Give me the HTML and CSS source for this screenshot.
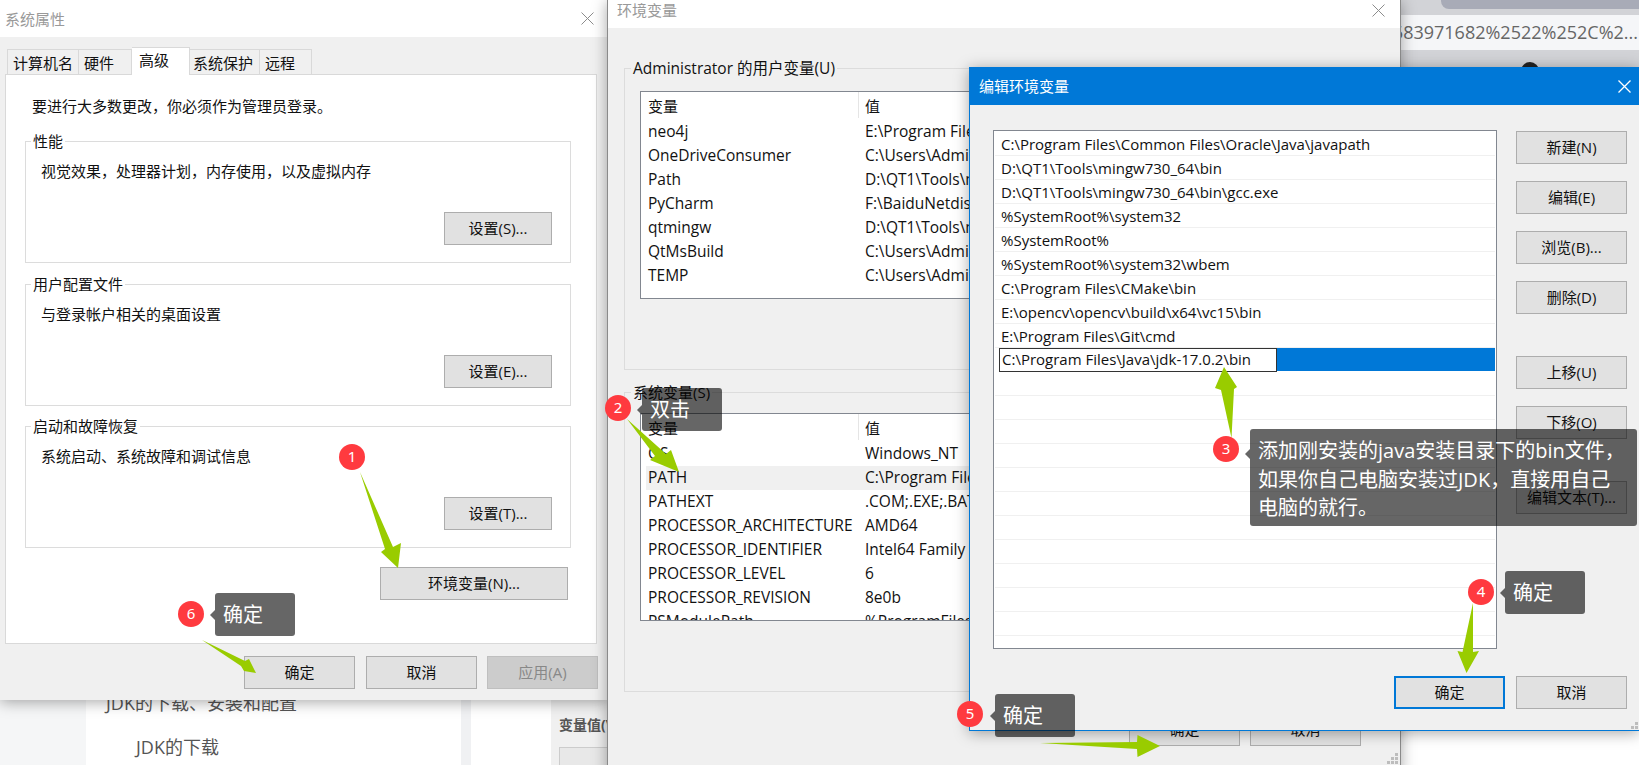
FILE: index.html
```html
<!DOCTYPE html>
<html lang="zh-CN">
<head>
    <meta charset="UTF-8">
    <title>环境变量配置</title>
    <link rel="stylesheet" href="styles.css">
</head>
<body>
<div class="desktop">

    <!-- Web page behind the dialogs -->
    <div class="backdrop">
        <div class="page-side"></div>
        <div class="page-card">
            <div class="toc-main">JDK的下载、安装和配置</div>
            <div class="toc-sub">JDK的下载</div>
        </div>
        <div class="page-gap"></div>
        <div class="page-white"></div>
        <div class="page-form">
            <div class="form-label">变量值(V</div>
            <div class="form-input"></div>
        </div>
    </div>
    <div class="browser-strip">
        <div class="strip-top"><div class="strip-pill"></div></div>
        <div class="strip-url">683971682%2522%252C%2...</div>
        <div class="strip-bottom"><div class="strip-dot"></div></div>
    </div>

    <!-- 系统属性 -->
    <div class="win win-system">
        <div class="titlebar">
            <span class="title-text">系统属性</span>
            <svg class="close-x" width="13" height="13" viewBox="0 0 13 13"><path d="M.5.5l12 12M12.5.5l-12 12"/></svg>
        </div>
        <div class="system-body">
            <div class="tabs">
                <div class="tab">计算机名</div>
                <div class="tab">硬件</div>
                <div class="tab tab-active">高级</div>
                <div class="tab tab-tight">系统保护</div>
                <div class="tab">远程</div>
            </div>
            <div class="tab-panel">
                <p class="admin-note">要进行大多数更改，你必须作为管理员登录。</p>
                <fieldset class="group sys-group">
                    <legend>性能</legend>
                    <p>视觉效果，处理器计划，内存使用，以及虚拟内存</p>
                    <div class="group-actions"><button class="btn btn-set">设置(S)...</button></div>
                </fieldset>
                <fieldset class="group sys-group">
                    <legend>用户配置文件</legend>
                    <p>与登录帐户相关的桌面设置</p>
                    <div class="group-actions"><button class="btn btn-set">设置(E)...</button></div>
                </fieldset>
                <fieldset class="group sys-group sys-group-last">
                    <legend>启动和故障恢复</legend>
                    <p>系统启动、系统故障和调试信息</p>
                    <div class="group-actions"><button class="btn btn-set">设置(T)...</button></div>
                </fieldset>
                <div class="env-action"><button class="btn btn-env">环境变量(N)...</button></div>
            </div>
            <div class="footer-btns system-footer">
                <button class="btn">确定</button>
                <button class="btn">取消</button>
                <button class="btn btn-disabled">应用(A)</button>
            </div>
        </div>
    </div>

    <!-- 环境变量 -->
    <div class="win win-env">
        <div class="titlebar titlebar-env">
            <span class="title-text">环境变量</span>
            <svg class="close-x" width="13" height="13" viewBox="0 0 13 13"><path d="M.5.5l12 12M12.5.5l-12 12"/></svg>
        </div>
        <div class="env-body">
            <fieldset class="group env-group">
                <legend>Administrator 的用户变量(U)</legend>
                <div class="var-list">
                    <div class="var-head"><span>变量</span><span>值</span></div>
                    <div class="var-row"><span>neo4j</span><span>E:\Program Files\neo4j\bin</span></div>
                    <div class="var-row"><span>OneDriveConsumer</span><span>C:\Users\Administrator\OneDrive</span></div>
                    <div class="var-row"><span>Path</span><span>D:\QT1\Tools\mingw730_64\bin</span></div>
                    <div class="var-row"><span>PyCharm</span><span>F:\BaiduNetdiskDownload\PyCharm\bin</span></div>
                    <div class="var-row"><span>qtmingw</span><span>D:\QT1\Tools\mingw730_64\bin</span></div>
                    <div class="var-row"><span>QtMsBuild</span><span>C:\Users\Administrator\AppData\Local</span></div>
                    <div class="var-row"><span>TEMP</span><span>C:\Users\Administrator\AppData\Local</span></div>
                </div>
            </fieldset>
            <fieldset class="group env-group env-group-second">
                <legend>系统变量(S)</legend>
                <div class="var-list var-list-second">
                    <div class="var-head"><span>变量</span><span>值</span></div>
                    <div class="var-row"><span>OS</span><span>Windows_NT</span></div>
                    <div class="var-row var-row-hover"><span>PATH</span><span>C:\Program Files\Common Files</span></div>
                    <div class="var-row"><span>PATHEXT</span><span>.COM;.EXE;.BAT;.CMD</span></div>
                    <div class="var-row"><span>PROCESSOR_ARCHITECTURE</span><span>AMD64</span></div>
                    <div class="var-row"><span>PROCESSOR_IDENTIFIER</span><span>Intel64 Family 6 Model 158</span></div>
                    <div class="var-row"><span>PROCESSOR_LEVEL</span><span>6</span></div>
                    <div class="var-row"><span>PROCESSOR_REVISION</span><span>8e0b</span></div>
                    <div class="var-row"><span>PSModulePath</span><span>%ProgramFiles%\WindowsPowerShell</span></div>
                </div>
            </fieldset>
            <div class="footer-btns env-footer">
                <button class="btn">确定</button>
                <button class="btn">取消</button>
            </div>
        </div>
        <svg class="grip grip-env" width="12" height="12" viewBox="0 0 12 12"><path d="M8 0h3v3H8zM4 4h3v3H4zM8 4h3v3H8zM0 8h3v3H0zM4 8h3v3H4zM8 8h3v3H8z"/></svg>
    </div>

    <!-- 编辑环境变量 -->
    <div class="win win-edit">
        <div class="titlebar titlebar-edit">
            <span class="title-text">编辑环境变量</span>
            <svg class="close-x" width="13" height="13" viewBox="0 0 13 13"><path d="M.5.5l12 12M12.5.5l-12 12"/></svg>
        </div>
        <div class="edit-body">
            <div class="edit-main">
                <div class="path-list">
                    <div class="path-row">C:\Program Files\Common Files\Oracle\Java\javapath</div>
                    <div class="path-row">D:\QT1\Tools\mingw730_64\bin</div>
                    <div class="path-row">D:\QT1\Tools\mingw730_64\bin\gcc.exe</div>
                    <div class="path-row">%SystemRoot%\system32</div>
                    <div class="path-row">%SystemRoot%</div>
                    <div class="path-row">%SystemRoot%\system32\wbem</div>
                    <div class="path-row">C:\Program Files\CMake\bin</div>
                    <div class="path-row">E:\opencv\opencv\build\x64\vc15\bin</div>
                    <div class="path-row">E:\Program Files\Git\cmd</div>
                    <div class="path-row path-row-selected"><span class="path-input">C:\Program Files\Java\jdk-17.0.2\bin</span><span class="path-fill"></span></div>
                    <div class="path-row"></div>
                    <div class="path-row"></div>
                    <div class="path-row"></div>
                    <div class="path-row"></div>
                    <div class="path-row"></div>
                    <div class="path-row"></div>
                    <div class="path-row"></div>
                    <div class="path-row"></div>
                    <div class="path-row"></div>
                    <div class="path-row"></div>
                    <div class="path-row"></div>
                </div>
                <div class="edit-actions">
                    <button class="btn">新建(N)</button>
                    <button class="btn">编辑(E)</button>
                    <button class="btn">浏览(B)...</button>
                    <button class="btn">删除(D)</button>
                    <button class="btn btn-spaced">上移(U)</button>
                    <button class="btn">下移(O)</button>
                    <button class="btn btn-spaced">编辑文本(T)...</button>
                </div>
            </div>
            <div class="footer-btns edit-footer">
                <button class="btn btn-focus">确定</button>
                <button class="btn">取消</button>
            </div>
        </div>
        <svg class="grip grip-edit" width="8" height="8" viewBox="0 0 8 8"><path d="M4 0h3v3H4zM0 4h3v3H0zM4 4h3v3H4z"/></svg>
    </div>

    <!-- Annotations -->
    <svg class="arrows" width="1639" height="765" viewBox="0 0 1639 765">
        <polygon points="360,472 393,547 401,543 398,568 381,552 385,549"/>
        <polygon points="627,419 666,454 671,450 679,472 650,460 655,456"/>
        <polygon points="1231.5,438 1234,389 1237,387 1224,367 1215,388 1221,390"/>
        <polygon points="1473,603 1473,652 1479,651 1466.5,673 1457.5,651 1462.5,652"/>
        <polygon points="1040,743 1137,742 1137.5,735 1160,746 1137.5,757 1137,749"/>
        <polygon points="202,640 245,661 249,659 256,673 244,671 241,666"/>
    </svg>

    <div class="badge badge-1">1</div>
    <div class="badge badge-2">2</div>
    <div class="badge badge-3">3</div>
    <div class="badge badge-4">4</div>
    <div class="badge badge-5">5</div>
    <div class="badge badge-6">6</div>

    <div class="tip tip-2">双击</div>
    <div class="tip tip-3">添加刚安装的java安装目录下的bin文件，<br>如果你自己电脑安装过JDK，直接用自己<br>电脑的就行。</div>
    <div class="tip tip-4">确定</div>
    <div class="tip tip-5">确定</div>
    <div class="tip tip-6">确定</div>
</div>
</body>
</html>
```

FILE: styles.css
```css
* {
    box-sizing: border-box;
}
body {
    margin: 0;
    background: #fff;
    font-family: "Open Sans", "Noto Sans CJK SC", sans-serif;
    font-size: 15px;
    line-height: 20px;
    color: #111;
}
p {
    margin: 0;
}
.desktop {
    position: relative;
    width: 1639px;
    height: 765px;
    overflow: hidden;
}

/* page behind */
.backdrop {
    position: absolute;
    left: 0;
    top: 0;
    width: 1639px;
    height: 765px;
    display: flex;
}
.page-side {
    width: 86px;
    background: #f5f6f7;
}
.page-card {
    width: 375px;
    background: #fff;
    padding: 691px 0 0 20px;
    font-size: 18px;
    line-height: 24px;
    color: #555;
}
.toc-sub {
    margin: 20px 0 0 30px;
}
.page-gap {
    width: 10px;
    background: #f0f1f3;
}
.page-white {
    width: 80px;
    background: #fff;
}
.page-form {
    width: 56px;
    background: #f0f0f0;
    padding: 715px 0 0 8px;
    white-space: nowrap;
    overflow: hidden;
}
.form-label {
    font-weight: 700;
    color: #555;
    font-size: 14px;
}
.form-input {
    width: 60px;
    height: 30px;
    margin-top: 12px;
    border: 1px solid #ccc;
    background: #e8e8e8;
}
.browser-strip {
    position: absolute;
    left: 1400px;
    top: 0;
    width: 239px;
}
.strip-top {
    height: 15px;
    background: #d2d3d7;
    padding-left: 41px;
}
.strip-pill {
    height: 9px;
    background: #a8abb7;
    border-bottom-left-radius: 8px;
}
.strip-url {
    height: 35px;
    background: #f5f6f8;
    color: #666;
    font-size: 18px;
    line-height: 35px;
    white-space: nowrap;
    display: flex;
    justify-content: flex-end;
    overflow: hidden;
    padding-right: 1px;
}
.strip-bottom {
    height: 17px;
    background: #d2d3d7;
    padding: 12px 0 0 121px;
    overflow: hidden;
}
.strip-dot {
    width: 18px;
    height: 18px;
    border-radius: 50%;
    background: #222;
}

/* windows */
.win {
    position: absolute;
    background: #f0f0f0;
    box-shadow: 0 2px 14px rgba(0, 0, 0, 0.35);
}
.win-system {
    left: 0;
    top: 0;
    width: 609px;
    height: 700px;
}
.win-env {
    left: 607px;
    top: 0;
    width: 794px;
    height: 775px;
    border-left: 1px solid #8a8a8a;
    border-right: 1px solid #8a8a8a;
}
.win-edit {
    left: 969px;
    top: 67px;
    width: 670px;
    height: 664px;
    border-left: 1px solid #0078d7;
    border-bottom: 1px solid #0078d7;
}
.titlebar {
    height: 37px;
    background: #fff;
    display: flex;
    align-items: center;
    justify-content: space-between;
    padding: 0 15px 0 5px;
    color: #999;
}
.titlebar-env {
    height: 28px;
    padding: 0 15px 8px 9px;
}
.titlebar-edit {
    height: 38px;
    background: #0078d7;
    color: #fff;
    margin-left: -1px;
    padding: 0 8px 0 10px;
}
.close-x {
    flex: none;
}
.close-x path {
    fill: none;
    stroke: #8c8c8c;
    stroke-width: 1;
}
.titlebar-edit .close-x path {
    stroke: #fff;
    stroke-width: 1.3;
}
.grip {
    position: absolute;
    fill: #bdbdbd;
}
.grip-env {
    right: 1px;
    top: 753px;
}
.grip-edit {
    right: 0;
    bottom: 0;
}

/* buttons */
.btn {
    display: block;
    width: 111px;
    height: 33px;
    padding: 0 0 2px;
    background: #e1e1e1;
    border: 1px solid #adadad;
    border-radius: 0;
    font: inherit;
    color: #111;
    white-space: nowrap;
}
.btn-disabled {
    background: #ccc;
    border-color: #bfbfbf;
    color: #888;
}
.btn-focus {
    border: 2px solid #0078d7;
}
.btn-set {
    width: 108px;
}
.btn-env {
    width: 188px;
}
.btn-spaced {
    margin-top: 25px;
}

/* group boxes */
.group {
    margin: 0;
    padding: 0;
    min-width: 0;
    border: 1px solid #dcdcdc;
}
.group legend {
    padding: 0 2px;
    line-height: 20px;
}

/* 系统属性 */
.system-body {
    padding: 10px 12px 0 5px;
}
.tabs {
    display: grid;
    grid-template-columns: 72px 53px 58px 70px 52px;
    margin-left: 2px;
    height: 27px;
    align-items: end;
}
.tab {
    height: 25px;
    line-height: 26px;
    padding-left: 5px;
    border: 1px solid #d9d9d9;
    border-bottom: 0;
    border-left-width: 0;
    background: #f0f0f0;
    white-space: nowrap;
}
.tab:first-child {
    border-left-width: 1px;
}
.tab-active {
    position: relative;
    height: 28px;
    margin-bottom: -1px;
    padding-left: 7px;
    background: #fff;
    line-height: 25px;
    z-index: 1;
}
.tab-tight {
    padding-left: 3px;
}
.tab-panel {
    height: 570px;
    padding: 21px 25px 0 19px;
    background: #fff;
    border: 1px solid #d9d9d9;
}
.admin-note {
    padding-left: 7px;
}
.sys-group {
    margin-top: 11px;
    padding: 0 18px 17px 15px;
}
.admin-note + .sys-group {
    margin-top: 15px;
}
.sys-group-last {
    margin-top: 10px;
}
.sys-group legend {
    margin-left: -10px;
}
.sys-group p {
    margin-top: 10px;
}
.group-actions {
    display: flex;
    justify-content: flex-end;
    margin-top: 31px;
}
.env-action {
    display: flex;
    justify-content: flex-end;
    margin: 19px 3px 0 0;
}
.footer-btns {
    display: flex;
    justify-content: flex-end;
    gap: 11px;
    margin-top: 12px;
}
.system-footer {
    margin-right: -1px;
}
.system-footer .btn-disabled {
    margin-left: -1px;
}

/* 环境变量 */
.env-body {
    padding: 30px 16px 0 16px;
}
.env-group {
    padding: 0 15px 70px 15px;
}
.env-group legend {
    margin-left: -9px;
    font-size: 15.5px;
}
.env-group-second {
    margin-top: 12px;
}
.env-group-second legend {
    font-size: 15px;
}
.var-list {
    height: 208px;
    margin-top: 13px;
    overflow: hidden;
    background: #fff;
    border: 1px solid #828790;
    font-size: 15.5px;
}
.var-list-second {
    margin-top: 11px;
}
.var-head,
.var-row {
    display: grid;
    grid-template-columns: 217px 1fr;
    white-space: nowrap;
}
.var-head {
    height: 28px;
    line-height: 28px;
    font-size: 15px;
}
.var-head span:last-child {
    border-left: 1px solid #e5e5e5;
    height: 26px;
    padding-left: 6px;
}
.var-row {
    height: 24px;
    line-height: 23px;
}
.var-head span:first-child,
.var-row span:first-child {
    padding-left: 7px;
}
.var-row span:last-child {
    padding-left: 7px;
}
.var-row-hover {
    grid-template-columns: 212px 1fr;
    background: #f0f0f0;
    margin-left: 5px;
}
.var-row-hover span:first-child {
    padding-left: 2px;
}
.env-footer {
    margin: 21px 23px 0 0;
    gap: 10px;
}

/* 编辑环境变量 */
.edit-body {
    padding: 25px 12px 0 23px;
}
.edit-main {
    display: flex;
    gap: 19px;
}
.path-list {
    width: 504px;
    height: 519px;
    padding: 1px 1px 0;
    overflow: hidden;
    background: #fff;
    border: 1px solid #828790;
}
.path-row {
    height: 24px;
    line-height: 24px;
    padding-left: 6px;
    border-bottom: 1px solid #f0f0f0;
    white-space: nowrap;
}
.path-row-selected {
    display: flex;
    padding-left: 4px;
    border-bottom-color: #fff;
}
.path-input {
    width: 278px;
    height: 24px;
    line-height: 21px;
    padding-left: 2px;
    background: #fff;
    border: 1px solid #333;
}
.path-fill {
    flex: 1;
    height: 23px;
    background: #0078d7;
}
.edit-actions {
    display: flex;
    flex-direction: column;
    gap: 17px;
    padding-top: 1px;
}
.edit-footer {
    margin-top: 27px;
}

/* annotations */
.arrows {
    position: absolute;
    left: 0;
    top: 0;
    fill: #99cc00;
}
.badge {
    position: absolute;
    width: 26px;
    height: 26px;
    border-radius: 50%;
    background: #ff3a3f;
    color: #fff;
    font-family: "Noto Sans", sans-serif;
    font-size: 15px;
    line-height: 25px;
    text-align: center;
}
.badge-1 { left: 339px; top: 444px; }
.badge-2 { left: 605px; top: 395px; }
.badge-3 { left: 1213px; top: 436px; }
.badge-4 { left: 1468px; top: 579px; }
.badge-5 { left: 957px; top: 701px; }
.badge-6 { left: 178px; top: 601px; }
.tip {
    position: absolute;
    padding: 8px 8px 7px;
    background: rgba(0, 0, 0, 0.6);
    border-radius: 3px;
    color: #fff;
    font-size: 20px;
    line-height: 28px;
    white-space: nowrap;
}
.tip::before {
    content: "";
    position: absolute;
    left: -5px;
    top: 50%;
    margin-top: -5px;
    border-top: 5px solid transparent;
    border-bottom: 5px solid transparent;
    border-right: 5px solid rgba(0, 0, 0, 0.6);
}
.tip-2 { left: 642px; top: 388px; width: 80px; height: 43px; }
.tip-3 { left: 1250px; top: 429px; width: 387px; height: 97px; line-height: 28.5px; }
.tip-4 { left: 1505px; top: 571px; width: 80px; height: 43px; }
.tip-5 { left: 995px; top: 694px; width: 80px; height: 43px; }
.tip-6 { left: 215px; top: 593px; width: 80px; height: 43px; }
.tip-3::before { top: 20px; margin-top: 0; }
```
